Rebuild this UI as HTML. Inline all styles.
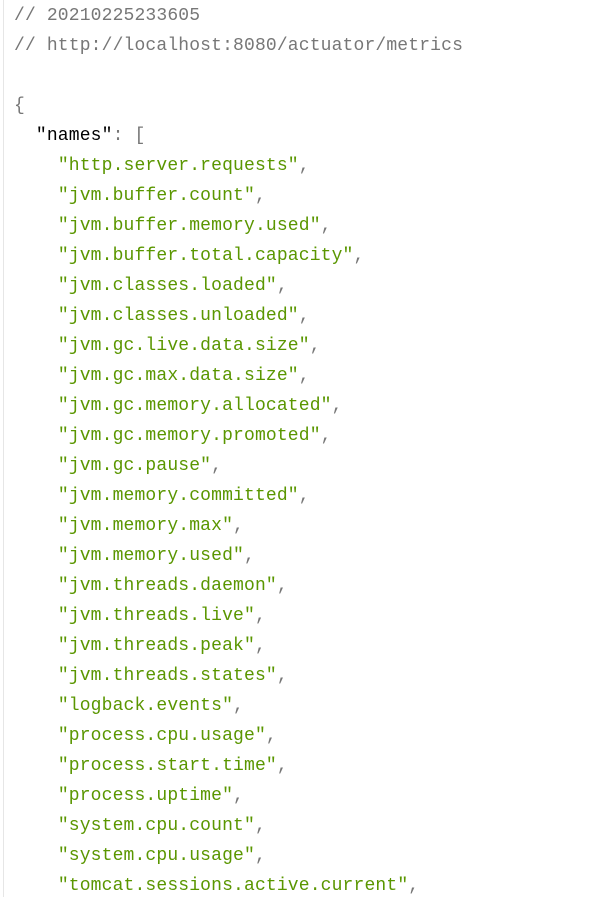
<!DOCTYPE html>
<html><head><meta charset="utf-8"><style>
html,body{margin:0;padding:0;background:#fff;width:606px;height:897px;overflow:hidden}
.bar{position:absolute;left:3px;top:0;width:1px;height:897px;background:#e6e6e6}
pre{position:absolute;left:14px;top:1px;margin:0;font-family:"Liberation Mono",monospace;font-size:18px;letter-spacing:0.15px;line-height:30px;color:#000}
.c{color:#777}.p{color:#777}.s{color:#5a9600}
</style></head><body><div class="bar"></div>
<pre><span class="c">// 20210225233605
// http://localhost:8080/actuator/metrics</span>

<span class="p">{</span>
  "names"<span class="p">: [</span>
    <span class="s">"http.server.requests"</span><span class="p">,</span>
    <span class="s">"jvm.buffer.count"</span><span class="p">,</span>
    <span class="s">"jvm.buffer.memory.used"</span><span class="p">,</span>
    <span class="s">"jvm.buffer.total.capacity"</span><span class="p">,</span>
    <span class="s">"jvm.classes.loaded"</span><span class="p">,</span>
    <span class="s">"jvm.classes.unloaded"</span><span class="p">,</span>
    <span class="s">"jvm.gc.live.data.size"</span><span class="p">,</span>
    <span class="s">"jvm.gc.max.data.size"</span><span class="p">,</span>
    <span class="s">"jvm.gc.memory.allocated"</span><span class="p">,</span>
    <span class="s">"jvm.gc.memory.promoted"</span><span class="p">,</span>
    <span class="s">"jvm.gc.pause"</span><span class="p">,</span>
    <span class="s">"jvm.memory.committed"</span><span class="p">,</span>
    <span class="s">"jvm.memory.max"</span><span class="p">,</span>
    <span class="s">"jvm.memory.used"</span><span class="p">,</span>
    <span class="s">"jvm.threads.daemon"</span><span class="p">,</span>
    <span class="s">"jvm.threads.live"</span><span class="p">,</span>
    <span class="s">"jvm.threads.peak"</span><span class="p">,</span>
    <span class="s">"jvm.threads.states"</span><span class="p">,</span>
    <span class="s">"logback.events"</span><span class="p">,</span>
    <span class="s">"process.cpu.usage"</span><span class="p">,</span>
    <span class="s">"process.start.time"</span><span class="p">,</span>
    <span class="s">"process.uptime"</span><span class="p">,</span>
    <span class="s">"system.cpu.count"</span><span class="p">,</span>
    <span class="s">"system.cpu.usage"</span><span class="p">,</span>
    <span class="s">"tomcat.sessions.active.current"</span><span class="p">,</span>
</pre></body></html>
